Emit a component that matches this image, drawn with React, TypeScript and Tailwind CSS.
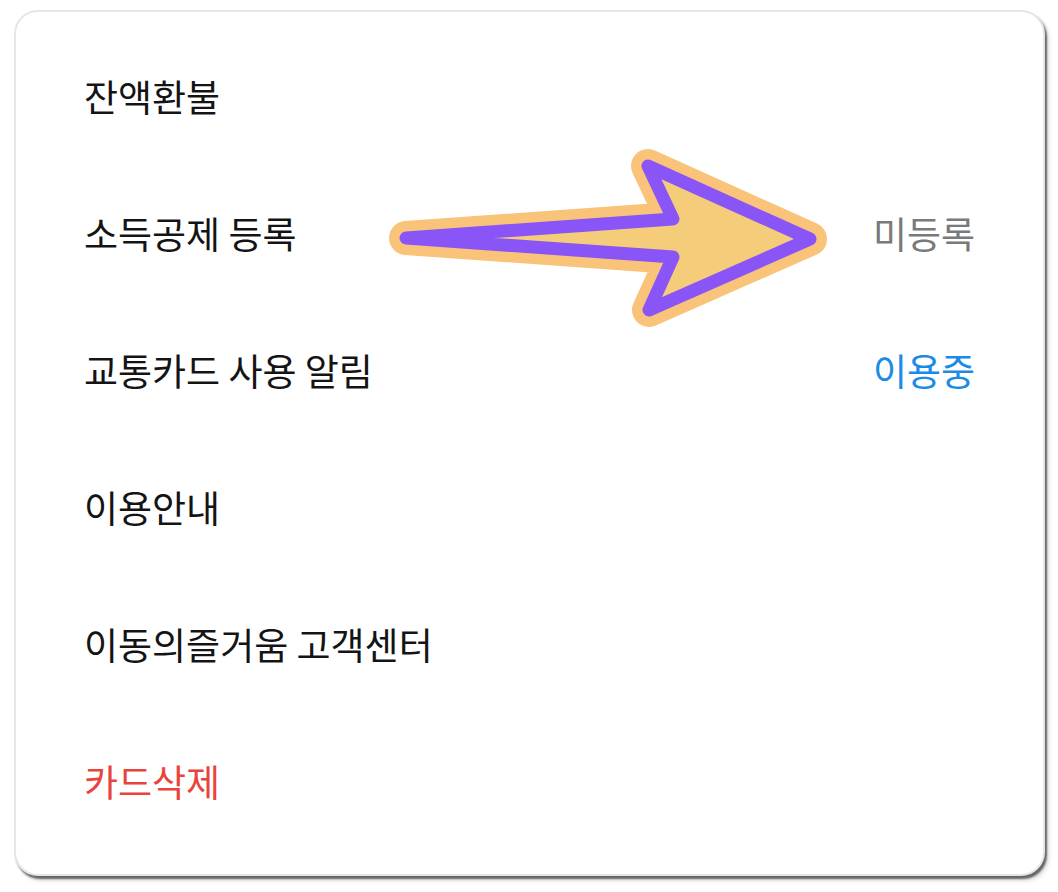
export default function App() {
  const rows = [
    { label: '잔액환불' },
    { label: '소득공제 등록', value: '미등록', valueClass: 'text-[#7a7a7a]' },
    { label: '교통카드 사용 알림', value: '이용중', valueClass: 'text-[#1a8be6]' },
    { label: '이용안내' },
    { label: '이동의즐거움 고객센터' },
    { label: '카드삭제', labelClass: 'text-[#e8433d]' },
  ];

  return (
    <div className="relative w-[1058px] h-[892px] bg-white pt-[10px] pl-[14px] font-['Noto_Sans_CJK_KR','Noto_Sans',sans-serif]">
      <div className="w-[1031px] h-[866px] rounded-[24px] bg-white border-2 border-[#e6e6e6] shadow-[2px_3px_2px_rgba(0,0,0,0.55),4px_5px_4px_rgba(0,0,0,0.12)] pt-[16px]">
        {rows.map((row) => (
          <div key={row.label} className="h-[137px] flex items-center justify-between px-[68px] text-[37px] leading-none tracking-[0px]">
            <span className={row.labelClass ?? 'text-[#141414]'}>{row.label}</span>
            {row.value && <span className={row.valueClass}>{row.value}</span>}
          </div>
        ))}
      </div>

      {/* annotation arrow */}
      <svg className="absolute left-0 top-0 pointer-events-none" width="1058" height="892" viewBox="0 0 1058 892">
        <polygon
          points="406,238 673,219 648,166 810,239 649,310 673,257"
          fill="#f5cd7a"
          stroke="#f9c47a"
          strokeWidth="34"
          strokeLinejoin="round"
        />
        <polygon
          points="406,238 673,219 648,166 810,239 649,310 673,257"
          fill="#f5cd7a"
          stroke="#8a55f6"
          strokeWidth="13"
          strokeLinejoin="round"
        />
      </svg>
    </div>
  );
}
